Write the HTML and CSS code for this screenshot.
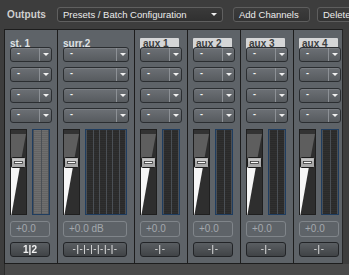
FILE: index.html
```html
<!DOCTYPE html>
<html>
<head>
<meta charset="utf-8">
<link rel="stylesheet" href="styles.css">
</head>
<body>
<div class="topbar">
  <span class="title">Outputs</span>
  <div class="preset"><span>Presets / Batch Configuration</span><i class="tri"></i></div>
  <div class="tbtn add">Add Channels</div>
  <div class="tbtn del">Delete</div>
</div>

<div class="mixer">
  <div class="strip">
    <div class="head"><span class="name">st. 1</span></div>
    <div class="dd"><span class="v">-</span><span class="arr"><i class="tri"></i></span></div>
    <div class="dd"><span class="v">-</span><span class="arr"><i class="tri"></i></span></div>
    <div class="dd"><span class="v">-</span><span class="arr"><i class="tri"></i></span></div>
    <div class="dd"><span class="v">-</span><span class="arr"><i class="tri"></i></span></div>
    <div class="fr">
      <svg class="fader" width="17" height="86" viewBox="0 0 17 86"><rect x="0.5" y="0.5" width="16" height="85" fill="#2e2e2e" stroke="#1f1f1f"/><rect x="1" y="1" width="15" height="4" fill="#333"/><polygon points="1,5 16,5 11.3,30 1,30" fill="#5e5e5e"/><polygon points="1,38 9.9,38 1.4,86 1,86" fill="#f6f6f6"/><rect x="1.5" y="28.5" width="14" height="10" rx="1" fill="#a9a9a9" stroke="#1c1c1c"/><rect x="2.5" y="29.5" width="12" height="3" fill="#c4c4c4"/><rect x="4.5" y="32.5" width="8" height="2" fill="#fafafa" stroke="#3a3a3a" stroke-width="0.8"/></svg>
      <div class="meter lit"><i></i><i></i></div>
    </div>
    <div class="lvl">+0.0</div>
    <div class="btn">1|2</div>
  </div>

  <div class="strip wide">
    <div class="head"><span class="name">surr.2</span></div>
    <div class="dd"><span class="v">-</span><span class="arr"><i class="tri"></i></span></div>
    <div class="dd"><span class="v">-</span><span class="arr"><i class="tri"></i></span></div>
    <div class="dd"><span class="v">-</span><span class="arr"><i class="tri"></i></span></div>
    <div class="dd"><span class="v">-</span><span class="arr"><i class="tri"></i></span></div>
    <div class="fr">
      <svg class="fader" width="17" height="86" viewBox="0 0 17 86"><rect x="0.5" y="0.5" width="16" height="85" fill="#2e2e2e" stroke="#1f1f1f"/><rect x="1" y="1" width="15" height="4" fill="#333"/><polygon points="1,5 16,5 11.3,30 1,30" fill="#5e5e5e"/><polygon points="1,38 9.9,38 1.4,86 1,86" fill="#f6f6f6"/><rect x="1.5" y="28.5" width="14" height="10" rx="1" fill="#a9a9a9" stroke="#1c1c1c"/><rect x="2.5" y="29.5" width="12" height="3" fill="#c4c4c4"/><rect x="4.5" y="32.5" width="8" height="2" fill="#fafafa" stroke="#3a3a3a" stroke-width="0.8"/></svg>
      <div class="meter"><i></i><i></i><i></i><i></i><i></i><i></i></div>
    </div>
    <div class="lvl">+0.0 dB</div>
    <div class="btn multi">-|-|-|-|-|-|-</div>
  </div>

  <div class="strip">
    <div class="head"><span class="name tag">aux 1</span></div>
    <div class="dd"><span class="v">-</span><span class="arr"><i class="tri"></i></span></div>
    <div class="dd"><span class="v">-</span><span class="arr"><i class="tri"></i></span></div>
    <div class="dd"><span class="v">-</span><span class="arr"><i class="tri"></i></span></div>
    <div class="dd"><span class="v">-</span><span class="arr"><i class="tri"></i></span></div>
    <div class="fr">
      <svg class="fader" width="17" height="86" viewBox="0 0 17 86"><rect x="0.5" y="0.5" width="16" height="85" fill="#2e2e2e" stroke="#1f1f1f"/><rect x="1" y="1" width="15" height="4" fill="#333"/><polygon points="1,5 16,5 11.3,30 1,30" fill="#5e5e5e"/><polygon points="1,38 9.9,38 1.4,86 1,86" fill="#f6f6f6"/><rect x="1.5" y="28.5" width="14" height="10" rx="1" fill="#a9a9a9" stroke="#1c1c1c"/><rect x="2.5" y="29.5" width="12" height="3" fill="#c4c4c4"/><rect x="4.5" y="32.5" width="8" height="2" fill="#fafafa" stroke="#3a3a3a" stroke-width="0.8"/></svg>
      <div class="meter"><i></i><i></i></div>
    </div>
    <div class="lvl">+0.0</div>
    <div class="btn multi">-|-</div>
  </div>

  <div class="strip">
    <div class="head"><span class="name tag">aux 2</span></div>
    <div class="dd"><span class="v">-</span><span class="arr"><i class="tri"></i></span></div>
    <div class="dd"><span class="v">-</span><span class="arr"><i class="tri"></i></span></div>
    <div class="dd"><span class="v">-</span><span class="arr"><i class="tri"></i></span></div>
    <div class="dd"><span class="v">-</span><span class="arr"><i class="tri"></i></span></div>
    <div class="fr">
      <svg class="fader" width="17" height="86" viewBox="0 0 17 86"><rect x="0.5" y="0.5" width="16" height="85" fill="#2e2e2e" stroke="#1f1f1f"/><rect x="1" y="1" width="15" height="4" fill="#333"/><polygon points="1,5 16,5 11.3,30 1,30" fill="#5e5e5e"/><polygon points="1,38 9.9,38 1.4,86 1,86" fill="#f6f6f6"/><rect x="1.5" y="28.5" width="14" height="10" rx="1" fill="#a9a9a9" stroke="#1c1c1c"/><rect x="2.5" y="29.5" width="12" height="3" fill="#c4c4c4"/><rect x="4.5" y="32.5" width="8" height="2" fill="#fafafa" stroke="#3a3a3a" stroke-width="0.8"/></svg>
      <div class="meter"><i></i><i></i></div>
    </div>
    <div class="lvl">+0.0</div>
    <div class="btn multi">-|-</div>
  </div>

  <div class="strip">
    <div class="head"><span class="name tag">aux 3</span></div>
    <div class="dd"><span class="v">-</span><span class="arr"><i class="tri"></i></span></div>
    <div class="dd"><span class="v">-</span><span class="arr"><i class="tri"></i></span></div>
    <div class="dd"><span class="v">-</span><span class="arr"><i class="tri"></i></span></div>
    <div class="dd"><span class="v">-</span><span class="arr"><i class="tri"></i></span></div>
    <div class="fr">
      <svg class="fader" width="17" height="86" viewBox="0 0 17 86"><rect x="0.5" y="0.5" width="16" height="85" fill="#2e2e2e" stroke="#1f1f1f"/><rect x="1" y="1" width="15" height="4" fill="#333"/><polygon points="1,5 16,5 11.3,30 1,30" fill="#5e5e5e"/><polygon points="1,38 9.9,38 1.4,86 1,86" fill="#f6f6f6"/><rect x="1.5" y="28.5" width="14" height="10" rx="1" fill="#a9a9a9" stroke="#1c1c1c"/><rect x="2.5" y="29.5" width="12" height="3" fill="#c4c4c4"/><rect x="4.5" y="32.5" width="8" height="2" fill="#fafafa" stroke="#3a3a3a" stroke-width="0.8"/></svg>
      <div class="meter"><i></i><i></i></div>
    </div>
    <div class="lvl">+0.0</div>
    <div class="btn multi">-|-</div>
  </div>

  <div class="strip">
    <div class="head"><span class="name tag">aux 4</span></div>
    <div class="dd"><span class="v">-</span><span class="arr"><i class="tri"></i></span></div>
    <div class="dd"><span class="v">-</span><span class="arr"><i class="tri"></i></span></div>
    <div class="dd"><span class="v">-</span><span class="arr"><i class="tri"></i></span></div>
    <div class="dd"><span class="v">-</span><span class="arr"><i class="tri"></i></span></div>
    <div class="fr">
      <svg class="fader" width="17" height="86" viewBox="0 0 17 86"><rect x="0.5" y="0.5" width="16" height="85" fill="#2e2e2e" stroke="#1f1f1f"/><rect x="1" y="1" width="15" height="4" fill="#333"/><polygon points="1,5 16,5 11.3,30 1,30" fill="#5e5e5e"/><polygon points="1,38 9.9,38 1.4,86 1,86" fill="#f6f6f6"/><rect x="1.5" y="28.5" width="14" height="10" rx="1" fill="#a9a9a9" stroke="#1c1c1c"/><rect x="2.5" y="29.5" width="12" height="3" fill="#c4c4c4"/><rect x="4.5" y="32.5" width="8" height="2" fill="#fafafa" stroke="#3a3a3a" stroke-width="0.8"/></svg>
      <div class="meter"><i></i><i></i></div>
    </div>
    <div class="lvl">+0.0</div>
    <div class="btn multi">-|-</div>
  </div>
</div>
<div class="footer"></div>
</body>
</html>
```

FILE: styles.css
```css
* { box-sizing: border-box; }
html, body { margin: 0; padding: 0; }
body {
  width: 349px;
  height: 275px;
  overflow: hidden;
  background: #3d3d3d;
  font-family: "Liberation Sans", Arial, sans-serif;
}

/* top bar */
.topbar {
  height: 29px;
  display: flex;
  align-items: flex-start;
  padding: 7px 0 0 7px;
  white-space: nowrap;
  overflow: hidden;
}
.title {
  width: 50px;
  flex: none;
  font-weight: bold;
  font-size: 10px;
  line-height: 15px;
  color: #cfcfcf;
  letter-spacing: 0.1px;
}
.preset {
  flex: none;
  width: 166px;
  height: 15px;
  display: flex;
  align-items: center;
  justify-content: space-between;
  padding: 0 5px 0 5px;
  background: linear-gradient(#3a3a3a, #303030);
  border: 1px solid #606060;
  border-radius: 3px;
  font-size: 9.5px;
  color: #ececec;
}
.tri {
  display: block;
  width: 0;
  height: 0;
  border-left: 3px solid transparent;
  border-right: 3px solid transparent;
  border-top: 3px solid #f0f0f0;
}
.tbtn {
  flex: none;
  height: 15px;
  line-height: 13px;
  padding: 0 5px;
  background: linear-gradient(#3c3c3c, #333);
  border: 1px solid #5e5e5e;
  border-radius: 3px;
  font-size: 9.5px;
  color: #ececec;
}
.add { width: 77px; margin-left: 10px; }
.del { width: 60px; margin-left: 7px; }

/* mixer */
.mixer {
  display: flex;
  width: 339px;
  height: 235px;
  margin-left: 4px;
  overflow: hidden;
  border: 1px solid #1d1d1d;
  border-right-color: #262626;
}
.strip {
  flex: none;
  width: 53px;
  height: 233px;
  padding: 0 5px;
  background: #5e6368;
  border-right: 1px solid #1d1d1d;
  display: flex;
  flex-direction: column;
}
.strip.wide { width: 77px; }

.head {
  height: 17px;
  padding-top: 3px;
  flex: none;
}
.name {
  display: inline-block;
  height: 11px;
  line-height: 11px;
  font-weight: bold;
  font-size: 10px;
  color: #dfe2e5;
}
.name.tag {
  width: 39px;
  padding-left: 3px;
  background: #d5d6d7;
  color: #3c3e40;
  border-radius: 1px;
}

.dd {
  flex: none;
  height: 15px;
  margin-bottom: 5.3px;
  display: flex;
  border: 1px solid #2b2e31;
  border-radius: 3px;
  background: linear-gradient(#6c7075, #575b5f);
  box-shadow: inset 0 1px 0 #797d82;
}
.dd .v {
  flex: 1;
  padding-left: 6px;
  color: #f4f4f4;
  font-size: 9px;
  font-weight: bold;
  line-height: 11px;
}
.dd .arr {
  width: 12px;
  flex: none;
  border-left: 1px solid #8c9095;
  display: flex;
  align-items: center;
  justify-content: center;
}

.fr {
  flex: none;
  display: flex;
  gap: 5px;
  height: 86px;
  margin-top: 0.5px;
}
.fader { display: block; flex: none; }
.meter {
  flex: 1;
  height: 86px;
  margin-right: 2px;
  border: 1px solid #1f3d60;
  background: #4a4f55;
  display: flex;
  gap: 1px;
  padding: 0 1px;
}
.meter i {
  flex: 1;
  background: repeating-linear-gradient(#2f2f2f 0 1px, #2a2a2a 1px 2px);
}
.meter.lit i {
  background: repeating-linear-gradient(#6e6e6e 0 1px, #646464 1px 2px);
}

.lvl {
  flex: none;
  width: calc(100% - 2px);
  height: 16px;
  margin-top: 6px;
  padding-left: 5px;
  border: 1px solid #80858a;
  border-radius: 3px;
  font-size: 10px;
  line-height: 14px;
  color: #a3a8ad;
}
.btn {
  flex: none;
  width: calc(100% - 2px);
  height: 15px;
  margin-top: 5px;
  border: 1px solid #222427;
  border-radius: 3px;
  background: linear-gradient(#5a5e62, #404346);
  text-align: center;
  font-size: 10px;
  font-weight: bold;
  line-height: 13px;
  color: #f2f2f2;
  will-change: transform;
}
.btn.multi {
  font-family: "DejaVu Sans", sans-serif;
  font-weight: normal;
  font-size: 9px;
  letter-spacing: 0.3px;
}

.footer {
  height: 11px;
  margin-left: 4px;
  background: #4a4a4a;
  border-left: 1px solid #2c2c2c;
}
```
